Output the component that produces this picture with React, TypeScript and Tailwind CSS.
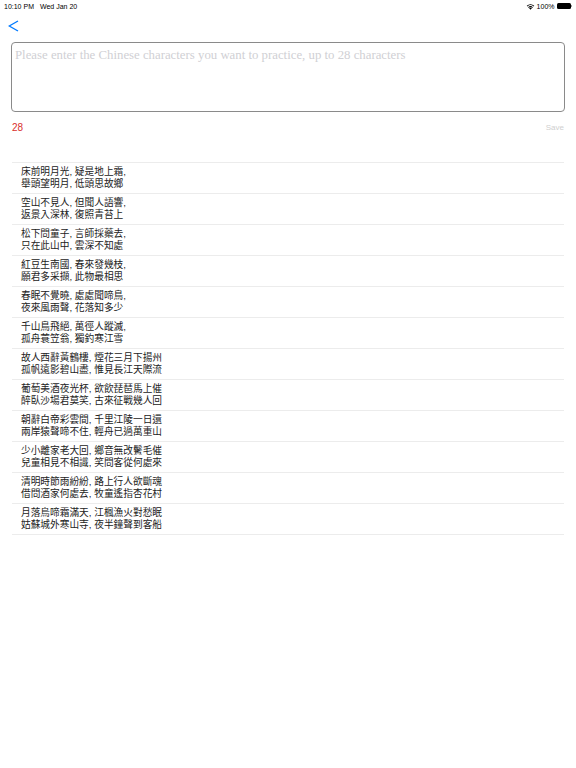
import React from 'react';

const poems: string[][] = [
  ['床前明月光, 疑是地上霜,', '舉頭望明月, 低頭思故鄉'],
  ['空山不見人, 但聞人語響,', '返景入深林, 復照青苔上'],
  ['松下問童子, 言師採藥去,', '只在此山中, 雲深不知處'],
  ['紅豆生南國, 春來發幾枝,', '願君多采擷, 此物最相思'],
  ['春眠不覺曉, 處處聞啼鳥,', '夜來風雨聲, 花落知多少'],
  ['千山鳥飛絕, 萬徑人蹤滅,', '孤舟蓑笠翁, 獨釣寒江雪'],
  ['故人西辭黃鶴樓, 煙花三月下揚州', '孤帆遠影碧山盡, 惟見長江天際流'],
  ['葡萄美酒夜光杯, 欲飲琵琶馬上催', '醉臥沙場君莫笑, 古來征戰幾人回'],
  ['朝辭白帝彩雲間, 千里江陵一日還', '兩岸猿聲啼不住, 輕舟已過萬重山'],
  ['少小離家老大回, 鄉音無改鬢毛催', '兒童相見不相識, 笑問客從何處來'],
  ['清明時節雨紛紛, 路上行人欲斷魂', '借問酒家何處去, 牧童遙指杏花村'],
  ['月落烏啼霜滿天, 江楓漁火對愁眠', '姑蘇城外寒山寺, 夜半鐘聲到客船'],
];

const App: React.FC = () => {
  return (
    <div className="w-[576px] h-[768px] bg-white font-['Liberation_Sans','Noto_Sans_CJK_TC',sans-serif] text-black">
      {/* Status bar */}
      <div className="flex items-center justify-between h-[11px] px-[4px] pt-[1px] text-[7px] leading-none">
        <div className="flex gap-[6px]">
          <span>10:10 PM</span>
          <span>Wed Jan 20</span>
        </div>
        <div className="flex items-center gap-[2px]">
          <svg width="9" height="7" viewBox="0 0 18 14">
            <path d="M9 13.5 L6 10.2 A4.6 4.6 0 0 1 12 10.2 Z" fill="#000" />
            <path d="M4.3 8.4 A6.8 6.8 0 0 1 13.7 8.4 L12.4 9.8 A4.9 4.9 0 0 0 5.6 9.8 Z" fill="#000" />
            <path d="M1.5 5.4 A10.8 10.8 0 0 1 16.5 5.4 L15.1 6.9 A8.8 8.8 0 0 0 2.9 6.9 Z" fill="#000" />
          </svg>
          <span>100%</span>
          <div className="flex items-center">
            <div className="w-[14px] h-[6px] rounded-[1.5px] bg-black" />
            <div className="w-[1px] h-[2px] bg-[#999] ml-[0.5px]" />
          </div>
        </div>
      </div>

      {/* Back */}
      <div className="h-[29px] px-[8px] flex items-center">
        <svg width="11" height="12" viewBox="0 0 11 12" className="mt-[1px]">
          <path d="M10 1 L1.2 6 L10 11" fill="none" stroke="#007aff" strokeWidth="1.4" />
        </svg>
      </div>

      {/* Input */}
      <div className="px-[11px] pt-[2px]">
        <div className="h-[70px] border border-[#8a8a8a] rounded-[4px] px-[3px] pt-[4px]">
          <p className="font-['Liberation_Serif',serif] text-[12.8px] leading-[16px] text-[#d0d0d4]">
            Please enter the Chinese characters you want to practice, up to 28 characters
          </p>
        </div>
      </div>

      <div className="flex items-center justify-between px-[12px] pt-[11px]">
        <span className="text-[10px] leading-none text-[#d9302c]">28</span>
        <span className="text-[8px] leading-none text-[#cfcfcf]">Save</span>
      </div>

      {/* Poems */}
      <div className="mx-[12px] mt-[29px] border-t border-[#ececec]">
        {poems.map((p, i) => (
          <div key={i} className="border-b border-[#ececec] pl-[9px] pt-[3px] pb-[3px] h-[31px] text-[9.7px] leading-[12px] text-[#222]">
            <div>{p[0]}</div>
            <div>{p[1]}</div>
          </div>
        ))}
      </div>
    </div>
  );
};

export default App;
